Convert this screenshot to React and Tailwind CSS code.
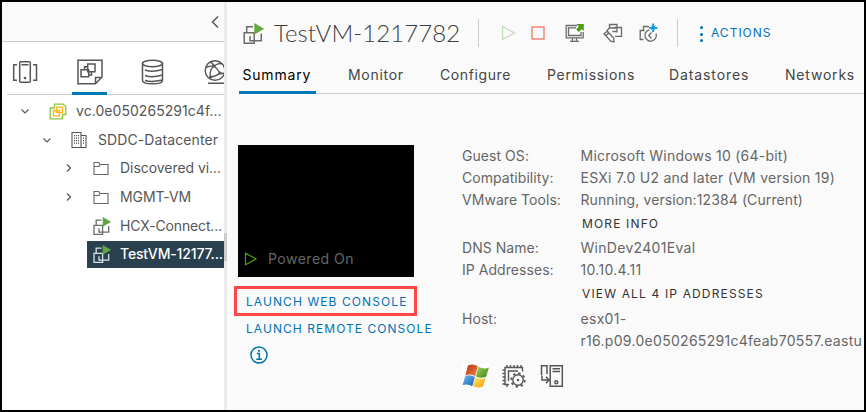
import React from "react";

function Chevron({ dir }) {
  return (
    <svg className="h-3 w-3 shrink-0" viewBox="0 0 12 12" fill="none" stroke="#565656" strokeWidth="1.2">
      {dir === "down" ? <path d="M2.5 4.5 6 8 9.5 4.5" /> : <path d="M4 2.5 7.5 6 4 9.5" />}
    </svg>
  );
}

function VmIcon({ className, color = "#6b6b6b" }) {
  return (
    <svg className={className} viewBox="0 0 21 21" fill="none" stroke={color} strokeWidth="1.5">
      <path d="M3.7 9.5V3.7H10M1.2 9.7H11.2V20.3H1.2Z" />
      <path d="M7 13V17.7H18.3V10.5" />
      <path d="M11.3 0V11.5L21.3 5.8Z" fill="#62a744" stroke="none" />
    </svg>
  );
}

function FolderIcon() {
  return (
    <svg className="h-[15px] w-4 shrink-0" viewBox="0 0 16 15" fill="none" stroke="#666" strokeWidth="1.1">
      <path d="M1 13.5V1.5H5.8L7 3.5H15V13.5ZM1 5.5H6L7 3.5" />
    </svg>
  );
}

function BuildingIcon() {
  return (
    <svg className="h-[18px] w-4 shrink-0" viewBox="0 0 16 18" fill="none" stroke="#555" strokeWidth="1.1">
      <path d="M1 16.5V1.5H10V16.5ZM10 4.5H15V16.5H10" />
      <path d="M3.5 4V14M5.5 4V14M7.5 4V14" strokeDasharray="1.2 1.3" />
      <path d="M12.5 6.5V14" strokeDasharray="1.2 1.3" />
    </svg>
  );
}

function VcenterIcon() {
  return (
    <svg className="h-[17px] w-[18px] shrink-0" viewBox="0 0 18 17" fill="none" strokeWidth="1.3">
      <path d="M5.5 4.5V1.2H14L16.8 3.5V11.5H13.5V15.8H1.2V5H5.5" stroke="#8cc63f" />
      <path d="M7.5 4.2H13.5V9.5H10.5V12.8H4.5V7.5H7.5ZM7.5 7.5V9.5H10.5M7.5 7.5H10.5V9.5" stroke="#fdb813" />
    </svg>
  );
}

function HostsTab() {
  return (
    <svg className="h-6 w-[26px]" viewBox="0 0 26 24" fill="none" stroke="#565656" strokeWidth="1.5">
      <rect x="7.7" y="1.7" width="10.6" height="20.6" rx="1" />
      <path d="M9.5 4.7H16.5M5 4.7H1.7V20.3H5M21 4.7H24.5V20.3H21" />
      <circle cx="13" cy="18" r="1.3" fill="#565656" stroke="none" />
    </svg>
  );
}

function VmsTab() {
  return (
    <svg className="h-[26px] w-[26px]" viewBox="0 0 26 26" fill="none" stroke="#565656" strokeWidth="1.5">
      <path d="M1 1.2H25V18L18.5 24.8H1ZM18.500 24.8V18.500H25" />
      <path d="M10.700 5H18V12.700H10.700ZM7.500 10.500V7.700H10.700M14.500 12.700V16H12M4 10.700H11.700V17.800H4Z" />
    </svg>
  );
}

function StorageTab() {
  return (
    <svg className="h-[26px] w-[23px]" viewBox="0 0 23 26" fill="none" stroke="#565656" strokeWidth="1.5">
      <ellipse cx="11.5" cy="4.5" rx="10" ry="3.2" />
      <path d="M1.5 4.5V21.5C1.5 23.5 6 24.8 11.5 24.8S21.5 23.5 21.5 21.5V4.5M4 11C8 12.5 15 12.5 21.5 10.5M4 16.5C8 18 15 18 21.5 16M4 21.500C8 22.8 14 22.8 21.500 21" />
    </svg>
  );
}

function NetworkTab() {
  return (
    <svg className="h-[26px] w-[24px] shrink-0" viewBox="0 0 24 26" fill="none" stroke="#565656" strokeWidth="1.4">
      <circle cx="11" cy="11.5" r="9.8" />
      <path d="M2 8.5Q6 6.5 10 7Q15 3.5 18 5M10 7Q13 9 16 14Q18 15 21 14M10 7Q5 11 6.5 18Q12 17.5 16 14M6 3Q8.5 3.5 10 7M4 24.3H24" />
      <circle cx="10" cy="7" r="1.6" fill="#565656" stroke="none" />
      <circle cx="16" cy="14" r="1.6" fill="#565656" stroke="none" />
      <circle cx="6.5" cy="18" r="1.6" fill="#565656" stroke="none" />
    </svg>
  );
}

function ConsoleIcon() {
  return (
    <svg className="h-5 w-5" viewBox="0 0 20 20" fill="none" stroke="#6b6b6b" strokeWidth="1.3">
      <path d="M12 2.5H1.2V14.8H18.2V9M11 4.8H3.5V12.5H16V9M7.5 15V18M11.5 15V18M5 18.3H14" />
      <path d="M11.5 1H18.8V8L16.6 6.2 13.8 9 11.2 6.5 13.8 3.5Z" fill="#4d9e13" stroke="none" />
    </svg>
  );
}

function EditIcon() {
  return (
    <svg className="h-5 w-5" viewBox="0 0 20 20" fill="none" stroke="#6b6b6b" strokeWidth="1.3">
      <path d="M6.500 4.500V1.500H14V4M3.500 8 6.500 5H14V9.500M11.500 4.500H18.500V13.300H12M9.500 8.500H14" />
      <path d="M4.300 8.200 1 10.800 7.800 18.200 11 19 10.800 15.200ZM2.800 12.700 5.900 9.900" />
    </svg>
  );
}

function SnapshotIcon() {
  return (
    <svg className="h-5 w-5" viewBox="0 0 20 20" fill="none" stroke="#6b6b6b" strokeWidth="1.3">
      <path d="M4.500 7V3.500H10M4.500 16.500H1.200V7.500H5.500" />
      <path d="M10.500 6.800A5.700 5.700 0 1 0 17 10.500M12.500 9.500 9.800 12.500 12.500 15.500" />
      <path d="M14.200.5V9M10 4.800H18.500" stroke="#0094e5" strokeWidth="1.800" />
      <path d="M11.800 2.400 16.600 7.200M16.600 2.400 11.800 7.200" stroke="#0094e5" strokeWidth=".7" />
    </svg>
  );
}

function WindowsLogo() {
  return (
    <svg className="h-6 w-7" viewBox="0 0 28 24">
      <defs>
        <linearGradient id="wr" x1="0" y1="0" x2="1" y2="1"><stop stopColor="#b52d10" /><stop offset="1" stopColor="#f68a45" /></linearGradient>
        <linearGradient id="wg" x1="0" y1="0" x2="1" y2="1"><stop stopColor="#a9d25a" /><stop offset="1" stopColor="#39831b" /></linearGradient>
        <linearGradient id="wb" x1="0" y1="0" x2="1" y2="1"><stop stopColor="#78b9ef" /><stop offset="1" stopColor="#1261b5" /></linearGradient>
        <linearGradient id="wy" x1="0" y1="0" x2="1" y2="1"><stop stopColor="#ffe477" /><stop offset="1" stopColor="#f5a000" /></linearGradient>
      </defs>
      <rect width="27" height="23" fill="#fff" />
      <path d="M6 1.5Q11-.8 15.8 2.2L13.200 12.200Q8.500 9.300 3.300 11.500Z" fill="url(#wr)" />
      <path d="M16.500 2.800Q22 5.600 27 3.500L24 12.800Q19 15 13.900 12.500Z" fill="url(#wg)" />
      <path d="M3.200 12.200Q8 10.200 12.900 12.900L10.300 22.200Q5.500 19.500 .5 21.200Z" fill="url(#wb)" />
      <path d="M13.600 13.300Q18.500 16 23.800 13.900L21 22.500Q16 24.500 11 22.300Z" fill="url(#wy)" />
    </svg>
  );
}

function CpuIcon() {
  return (
    <svg className="h-6 w-6" viewBox="0 0 24 24" fill="none" stroke="#565656" strokeWidth="1.4">
      <path d="M7 20.500H3V3.500H20.500V7.500M6.500 17V7H16" />
      <path d="M5 1V3M8.500 1V3M12 1V3M15.500 1V3M19 1V3M.5 6H3M.5 9.500H3M.5 13H3M.5 16.500H3M.5 20H3M5 21V23" />
      <circle cx="16" cy="16" r="5.200" />
      <circle cx="16" cy="16" r="6.700" strokeWidth="1.900" strokeDasharray="2.360 2.900" />
      <circle cx="16" cy="16" r="1.200" fill="#565656" stroke="none" />
    </svg>
  );
}

function ServerIcon() {
  return (
    <svg className="h-6 w-6" viewBox="0 0 24 24" fill="none" stroke="#565656" strokeWidth="1.500">
      <path d="M10.200 22.300V1.700H22.300V22.300H9.500M12.500 4.800H20M12.500 7.500H20M7 10V1.700H1.500V11M2 11.500V16H8.500M6 12.800 9 16 6 19.200" />
      <circle cx="16.300" cy="18.300" r="1.500" />
    </svg>
  );
}

function TreeRow({ indent, chevron, icon, label, tracking, selected }) {
  return (
    <div className={"flex h-[28.6px] items-center " + indent}>
      <div className="flex w-[24px] shrink-0 items-center">{chevron && <Chevron dir={chevron} />}</div>
      <div className={"flex h-[27px] min-w-0 flex-1 items-center " + (selected ? "bg-[#29414e] text-white font-medium" : "")}>
        <div className="flex w-[33px] shrink-0 items-center pl-1.5">{icon}</div>
        <span className={"whitespace-nowrap " + tracking}>{label}</span>
      </div>
    </div>
  );
}

function Sidebar() {
  return (
    <aside className="flex w-[222px] shrink-0 flex-col overflow-hidden bg-white">
      <div className="flex h-10 shrink-0 items-center justify-end border-b border-[#ccc] bg-[#fafafa] pr-[5px]">
        <svg className="h-3 w-2" viewBox="0 0 8 12" fill="none" stroke="#565656" strokeWidth="1.500"><path d="M7 .5 1.500 6 7 11.500" /></svg>
      </div>
      <nav className="ml-[5px] flex h-[53px] shrink-0 items-stretch border-b border-[#ccc]">
        <div className="flex w-[65px] shrink-0 items-center pl-[5px] pt-[7px]"><HostsTab /></div>
        <div className="-mb-px flex w-[35px] shrink-0 items-center justify-center border-b-[3px] border-[#0079b8] pt-[9px]"><VmsTab /></div>
        <div className="ml-[34px] flex shrink-0 items-center pt-[7px]"><StorageTab /></div>
        <div className="ml-10 flex shrink-0 items-center pt-[7px]"><NetworkTab /></div>
      </nav>
      <div className="pt-[2px] text-sm text-[#565656]">
        <TreeRow indent="pl-[17px]" chevron="down" icon={<VcenterIcon />} label="vc.0e050265291c4f..." tracking="tracking-[0.05px]" />
        <TreeRow indent="pl-[39px]" chevron="down" icon={<BuildingIcon />} label="SDDC-Datacenter" tracking="tracking-[0.1px]" />
        <TreeRow indent="pl-[61px]" chevron="right" icon={<FolderIcon />} label="Discovered vi..." tracking="tracking-[-0.05px]" />
        <TreeRow indent="pl-[61px]" chevron="right" icon={<FolderIcon />} label="MGMT-VM" tracking="tracking-[-0.1px]" />
        <TreeRow indent="pl-[61px]" icon={<VmIcon className="h-[18px] w-[18px]" />} label="HCX-Connect..." tracking="tracking-[-0.15px]" />
        <TreeRow indent="pl-[61px]" icon={<VmIcon className="h-[18px] w-[18px]" color="#d9e4ea" />} label="TestVM-12177..." tracking="tracking-[-0.15px]" selected />
      </div>
    </aside>
  );
}

function Toolbar() {
  return (
    <header className="flex h-[62px] items-center pl-4">
      <VmIcon className="h-[21px] w-[21px] shrink-0" />
      <h1 className="ml-[10px] w-[204px] whitespace-nowrap font-['Lato',sans-serif] text-2xl font-light tracking-[0.08px] text-[#404040]">TestVM-1217782</h1>
      <div className="h-7 w-px bg-[#ccc]" />
      <div className="ml-[22px] flex items-center">
        <svg className="h-4 w-[15px]" viewBox="0 0 15 16" fill="none" stroke="#c1dfba" strokeWidth="1.300"><path d="M1.500 1.500V14.500L13.500 8Z" /></svg>
        <svg className="ml-[15px] h-[14px] w-[14px]" viewBox="0 0 14 14" fill="none" stroke="#f3765f" strokeWidth="1.300"><rect x="1" y="1" width="12" height="12" /></svg>
        <div className="ml-[20px]"><ConsoleIcon /></div>
        <div className="ml-[18px]"><EditIcon /></div>
        <div className="ml-4"><SnapshotIcon /></div>
      </div>
      <div className="ml-[18px] h-7 w-px bg-[#ccc]" />
      <div className="ml-[22px] flex flex-col gap-[3.500px] pt-[2px]">
        <i className="h-[3px] w-[3px] rounded-full bg-[#0072a3]" />
        <i className="h-[3px] w-[3px] rounded-full bg-[#0072a3]" />
        <i className="h-[3px] w-[3px] rounded-full bg-[#0072a3]" />
      </div>
      <span className="ml-2 text-xs tracking-[1px] text-[#0072b8]">ACTIONS</span>
    </header>
  );
}

function Tabs() {
  return (
    <nav className="ml-3 flex h-[30px] shrink-0 items-stretch whitespace-nowrap border-b border-[#ccc] text-sm text-[#454545]">
      <span className="-mb-px w-[77px] border-b-[3px] border-[#0079b8] pl-[3.5px] pt-px text-black tracking-[0.8px]">Summary</span>
      <span className="ml-8 w-[92px] pt-px tracking-[0.7px]">Monitor</span>
      <span className="w-[107px] pt-px tracking-[0.6px]">Configure</span>
      <span className="w-[122px] pt-px tracking-[0.7px]">Permissions</span>
      <span className="w-[116px] pt-px tracking-[0.9px]">Datastores</span>
      <span className="pt-px tracking-[0.8px]">Networks</span>
    </nav>
  );
}

function Row({ label, children, tracking }) {
  return (
    <div className="flex">
      <span className="w-[118.5px] shrink-0 tracking-[0.05px]">{label}</span>
      <span className={tracking}>{children}</span>
    </div>
  );
}

function Details() {
  return (
    <section className="ml-[41px] w-[402px] overflow-hidden whitespace-nowrap text-sm leading-[22px] text-[#666]">
      <Row label="Guest OS:" tracking="tracking-[0.23px]">Microsoft Windows 10 (64-bit)</Row>
      <Row label="Compatibility:" tracking="tracking-[0.27px]">ESXi 7.0 U2 and later (VM version 19)</Row>
      <Row label="VMware Tools:" tracking="tracking-[0.1px]">Running, version:12384 (Current)</Row>
      <div className="h-[26px] pl-[120px] text-xs leading-[26px] tracking-[1.15px] text-[#333]">MORE INFO</div>
      <Row label="DNS Name:" tracking="tracking-[0.3px]">WinDev2401Eval</Row>
      <Row label="IP Addresses:" tracking="tracking-[0.3px]">10.10.4.11</Row>
      <div className="h-[27px] pl-[120px] text-xs leading-[26px] tracking-[1.15px] text-[#333]">VIEW ALL 4 IP ADDRESSES</div>
      <Row label="Host:" tracking="tracking-[0.29px]">esx01-<br />r16.p09.0e050265291c4feab70557.eastu</Row>
      <div className="mt-3 flex items-center">
        <WindowsLogo />
        <div className="ml-3"><CpuIcon /></div>
        <div className="ml-[14px]"><ServerIcon /></div>
      </div>
    </section>
  );
}

function ConsolePanel() {
  return (
    <section className="w-[186px] shrink-0 whitespace-nowrap text-xs text-[#0072b8]">
      <div className="ml-[3px] flex h-[132px] w-[176px] items-end bg-black pb-[8px] pl-[6px]">
        <div className="flex items-center">
          <svg className="h-[14px] w-[14px]" viewBox="0 0 14 14" fill="none" stroke="#4d9e13" strokeWidth="1.200"><path d="M1.500 1.200V12.800L12 7Z" /></svg>
          <span className="ml-[10px] text-sm tracking-[0.5px] text-[#666]">Powered On</span>
        </div>
      </div>
      <div className="-ml-px mt-[9px] flex h-[30px] w-[183px] items-center border-[3px] border-[#ff4747] pl-[9px] pt-[2px] tracking-[1.08px]">LAUNCH WEB CONSOLE</div>
      <div className="flex h-6 items-center pl-[11px] pt-[2px] tracking-[1.05px]">LAUNCH REMOTE CONSOLE</div>
      <svg className="ml-[15px] mt-[6px] h-[18px] w-[18px]" viewBox="0 0 18 18" fill="none" stroke="#0072a3" strokeWidth="1.500">
        <circle cx="9" cy="9" r="8" />
        <path d="M7 7.500H9.300V13.200M6.300 13.200H12" />
        <circle cx="9" cy="4.800" r="1.100" fill="#0072a3" stroke="none" />
      </svg>
    </section>
  );
}

export default function App() {
  return (
    <div className="flex h-[412px] w-[866px] overflow-hidden border-2 border-black bg-[#fafafa] font-['Inter',sans-serif]">
      <Sidebar />
      <div className="w-[3px] shrink-0 bg-[#ebebeb] pt-[231px]"><div className="h-7 bg-[#ccc]" /></div>
      <main className="flex min-w-0 flex-1 flex-col">
        <Toolbar />
        <Tabs />
        <div className="flex pl-2 pt-[51px]">
          <ConsolePanel />
          <Details />
        </div>
      </main>
    </div>
  );
}
